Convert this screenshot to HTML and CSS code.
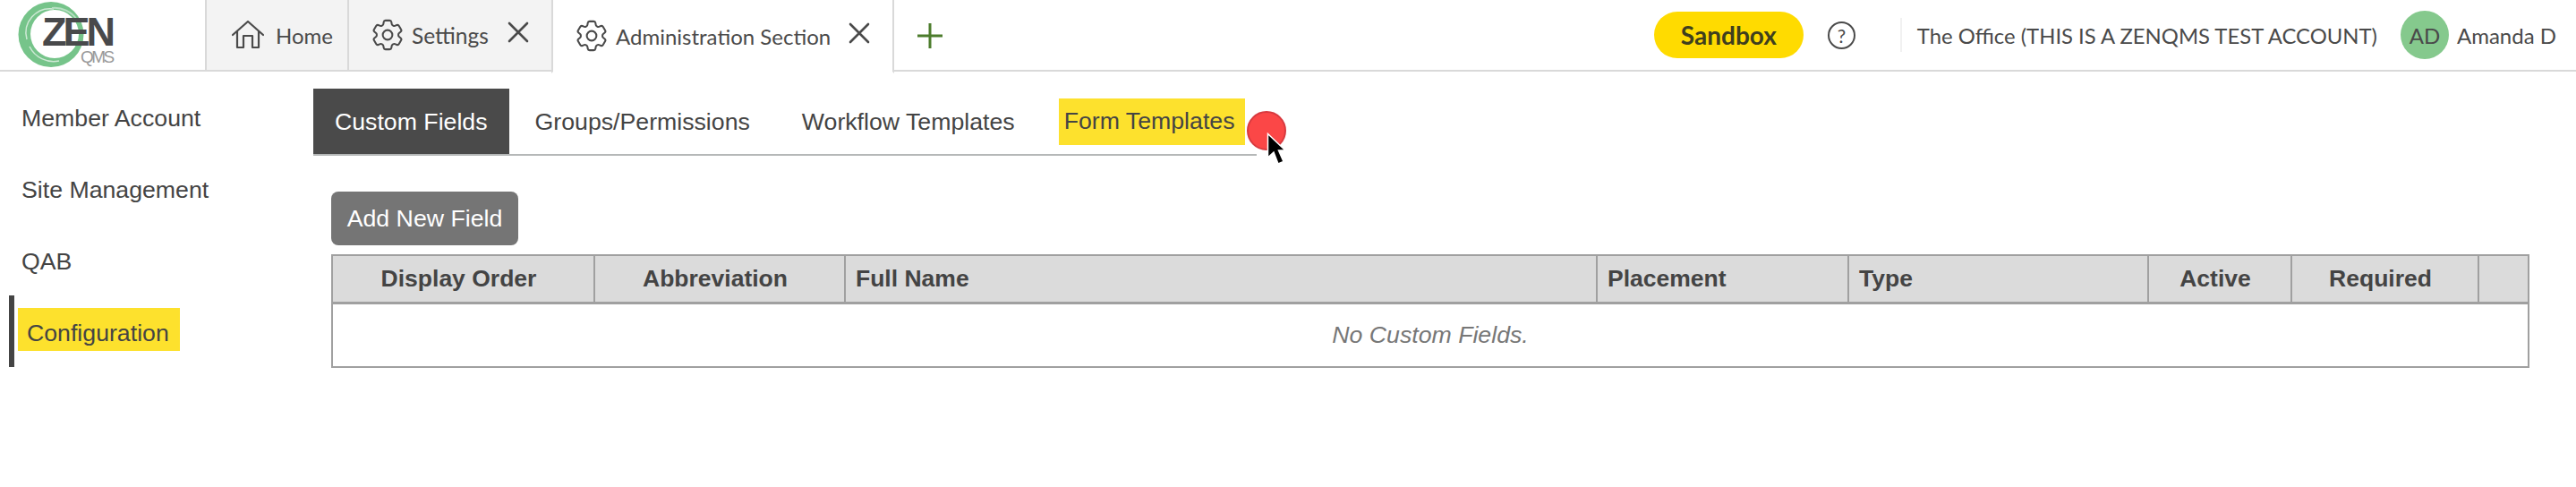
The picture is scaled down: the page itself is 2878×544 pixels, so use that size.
FILE: index.html
```html
<!DOCTYPE html>
<html lang="en">
<head>
<meta charset="utf-8">
<title>Administration Section</title>
<link rel="stylesheet" href="styles.css">
</head>
<body>
<header class="topbar">
  <div class="logo">
    <svg class="logo-ring" viewBox="0 0 76 78" width="76" height="78">
      <path fill-rule="evenodd" fill="#76c48a" d="M39 2 A36.500 36.500 0 1 0 39 75 A36.500 36.500 0 1 0 39 2 Z M43 11 A27 27 0 1 1 43 65 A27 27 0 1 1 43 11 Z"/>
      <path d="M12 44 A27 27 0 0 1 42 10 M15 52 A30 30 0 0 0 48 68" fill="none" stroke="#cfe9d6" stroke-width="1.500"/>
      <path d="M40 9 A30 30 0 0 1 68 22" fill="none" stroke="#b6dfc2" stroke-width="2"/>
    </svg>
    <span class="logo-zen">ZEN</span>
    <span class="logo-qms">QMS</span>
  </div>
  <nav class="apptabs">
    <div class="apptab home">
      <svg class="ico-home" viewBox="0 0 36 32" width="36" height="32"><path d="M1 16 L18 1 L35 16 M6 12 V30 H13 V17 H23 V30 H30 V12" fill="none" stroke="#4a4a4a" stroke-width="2.2" stroke-linejoin="round" stroke-linecap="round"/></svg>
      <span>Home</span>
    </div>
    <div class="apptab settings">
      <svg class="ico-gear" viewBox="2.500 2 19 20" width="34" height="36"><circle cx="12" cy="12" r="3" fill="none" stroke="#4a4a4a" stroke-width="1.150"/><path d="M9.594 3.94c.09-.542.56-.94 1.11-.94h2.593c.55 0 1.02.398 1.11.94l.213 1.281c.063.374.313.686.645.87.074.04.147.083.22.127.325.196.72.257 1.075.124l1.217-.456a1.125 1.125 0 0 1 1.37.49l1.296 2.247a1.125 1.125 0 0 1-.26 1.431l-1.003.827c-.293.241-.438.613-.43.992a7.723 7.723 0 0 1 0 .255c-.008.378.137.75.43.991l1.004.827c.424.35.534.955.26 1.43l-1.298 2.247a1.125 1.125 0 0 1-1.369.491l-1.217-.456c-.355-.133-.75-.072-1.076.124a6.470 6.470 0 0 1-.22.128c-.331.183-.581.495-.644.869l-.213 1.281c-.09.543-.56.94-1.11.94h-2.594c-.55 0-1.019-.398-1.11-.94l-.213-1.281c-.062-.374-.312-.686-.644-.87a6.520 6.520 0 0 1-.22-.127c-.325-.196-.72-.257-1.076-.124l-1.217.456a1.125 1.125 0 0 1-1.369-.49l-1.297-2.247a1.125 1.125 0 0 1 .26-1.431l1.004-.827c.292-.24.437-.613.43-.991a6.932 6.932 0 0 1 0-.255c.007-.38-.138-.751-.43-.992l-1.004-.827a1.125 1.125 0 0 1-.26-1.43l1.297-2.247a1.125 1.125 0 0 1 1.37-.491l1.216.456c.356.133.751.072 1.076-.124.072-.044.146-.086.22-.128.332-.183.582-.495.644-.869l.214-1.28Z" fill="none" stroke="#4a4a4a" stroke-width="1.150" stroke-linejoin="round"/></svg>
      <span>Settings</span>
      <svg class="ico-x" viewBox="0 0 24 24" width="24" height="24"><path d="M2 2 L22 22 M22 2 L2 22" stroke="#4a4a4a" stroke-width="2.600" stroke-linecap="round"/></svg>
    </div>
    <div class="apptab active">
      <svg class="ico-gear" viewBox="2.500 2 19 20" width="34" height="36"><circle cx="12" cy="12" r="3" fill="none" stroke="#4a4a4a" stroke-width="1.150"/><path d="M9.594 3.94c.09-.542.56-.94 1.11-.94h2.593c.55 0 1.02.398 1.11.94l.213 1.281c.063.374.313.686.645.87.074.04.147.083.22.127.325.196.72.257 1.075.124l1.217-.456a1.125 1.125 0 0 1 1.37.49l1.296 2.247a1.125 1.125 0 0 1-.26 1.431l-1.003.827c-.293.241-.438.613-.43.992a7.723 7.723 0 0 1 0 .255c-.008.378.137.75.43.991l1.004.827c.424.35.534.955.26 1.43l-1.298 2.247a1.125 1.125 0 0 1-1.369.491l-1.217-.456c-.355-.133-.75-.072-1.076.124a6.470 6.470 0 0 1-.22.128c-.331.183-.581.495-.644.869l-.213 1.281c-.09.543-.56.94-1.11.94h-2.594c-.55 0-1.019-.398-1.11-.94l-.213-1.281c-.062-.374-.312-.686-.644-.87a6.520 6.520 0 0 1-.22-.127c-.325-.196-.72-.257-1.076-.124l-1.217.456a1.125 1.125 0 0 1-1.369-.49l-1.297-2.247a1.125 1.125 0 0 1 .26-1.431l1.004-.827c.292-.24.437-.613.43-.991a6.932 6.932 0 0 1 0-.255c.007-.38-.138-.751-.43-.992l-1.004-.827a1.125 1.125 0 0 1-.26-1.43l1.297-2.247a1.125 1.125 0 0 1 1.37-.491l1.216.456c.356.133.751.072 1.076-.124.072-.044.146-.086.22-.128.332-.183.582-.495.644-.869l.214-1.28Z" fill="none" stroke="#4a4a4a" stroke-width="1.150" stroke-linejoin="round"/></svg>
      <span>Administration Section</span>
      <svg class="ico-x" viewBox="0 0 24 24" width="24" height="24"><path d="M2 2 L22 22 M22 2 L2 22" stroke="#4a4a4a" stroke-width="2.600" stroke-linecap="round"/></svg>
    </div>
    <div class="addtab">
      <svg viewBox="0 0 28 28" width="28" height="28"><path d="M14 0 V28 M0 14 H28" stroke="#4c7c2c" stroke-width="3"/></svg>
    </div>
  </nav>
  <div class="account">
    <span class="sandbox">Sandbox</span>
    <span class="help">?</span>
    <span class="divider"></span>
    <span class="org">The Office (THIS IS A ZENQMS TEST ACCOUNT)</span>
    <span class="avatar">AD</span>
    <span class="user">Amanda D</span>
  </div>
</header>
<div class="layout">
  <aside class="sidenav">
    <a class="sideitem">Member Account</a>
    <a class="sideitem">Site Management</a>
    <a class="sideitem">QAB</a>
    <a class="sideitem current"><mark class="hl">Configuration</mark></a>
  </aside>
  <main class="content">
    <div class="subtabs">
      <a class="subtab selected">Custom Fields</a>
      <a class="subtab">Groups/Permissions</a>
      <a class="subtab">Workflow Templates</a>
      <mark class="hl subtab-hl">Form Templates</mark>
      <span class="click-dot"></span>
      <svg class="cursor" viewBox="0 0 22 38" width="22" height="38"><path d="M1.500 1.500 V28 L8 22 L13 35 L19 32.500 L13.500 20 L21 20 Z" fill="#000" stroke="#fff" stroke-width="1.500"/></svg>
    </div>
    <button class="addbtn">Add New Field</button>
    <table class="fields">
      <thead>
        <tr>
          <th class="c-order center">Display Order</th>
          <th class="c-abbr center">Abbreviation</th>
          <th class="c-name">Full Name</th>
          <th class="c-place">Placement</th>
          <th class="c-type">Type</th>
          <th class="c-active center">Active</th>
          <th class="c-req center">Required</th>
          <th class="c-last"></th>
        </tr>
      </thead>
      <tbody>
        <tr><td class="empty" colspan="8">No Custom Fields.</td></tr>
      </tbody>
    </table>
  </main>
</div>
</body>
</html>
```
FILE: styles.css
```css
* { box-sizing: border-box; }
html, body { margin: 0; padding: 0; background: #fff; }
body { width: 2878px; height: 544px; overflow: hidden; font-family: "Liberation Sans", Arial, sans-serif; color: #444; }

.topbar { display: flex; height: 80px; border-bottom: 2px solid #d9d9d9; font-family: Lato, sans-serif; color: #4a4a4a; }
.logo { position: relative; width: 229px; flex: none; }
.logo-ring { position: absolute; left: 18px; top: 0; }
.logo-zen { position: absolute; left: 47px; top: 18px; font-family: "Liberation Sans", sans-serif; font-weight: 700; font-size: 45px; line-height: 36px; letter-spacing: -4px; color: #48494b; }
.logo-qms { position: absolute; left: 90px; top: 57px; font-family: "Liberation Sans", sans-serif; font-size: 19px; line-height: 14px; letter-spacing: -2.500px; color: #999; }

.apptabs { display: flex; height: 80px; flex: none; }
.apptab { display: flex; align-items: center; height: 80px; border-left: 2px solid #d9d9d9; border-bottom: 2px solid #d9d9d9; background: #f3f3f3; font-size: 24px; }
.apptab.home { width: 159px; padding-left: 28px; gap: 13px; }
.apptab.settings { width: 228px; padding-left: 26px; gap: 10px; }
.apptab.settings .ico-x { margin: -6px 0 0 11px; }
.apptab.settings span { font-size: 24.500px; }
.apptab.active { width: 383px; padding-left: 26px; gap: 10px; background: #fff; border-bottom-color: #fff; border-right: 2px solid #d9d9d9; height: 82px; }
.apptab.active .ico-x { margin: -6px 0 0 10px; }
.addtab { display: flex; align-items: center; padding-left: 26px; }

.account { display: flex; align-items: center; margin-left: auto; height: 78px; padding-right: 22px; font-size: 24px; }
.sandbox { display: flex; align-items: center; justify-content: center; width: 167px; height: 52px; border-radius: 26px; background: #ffdb00; color: #3f3f1e; font-weight: 700; font-size: 28px; }
.help { display: flex; align-items: center; justify-content: center; width: 31px; height: 31px; margin-left: 27px; border: 2px solid #4a4a4a; border-radius: 50%; font-size: 21px; }
.divider { width: 2px; height: 38px; margin-left: 50px; background: #f1f1f1; }
.org { margin-left: 17px; font-size: 23.850px; white-space: nowrap; }
.avatar { display: flex; align-items: center; justify-content: center; width: 54px; height: 54px; margin-left: 26px; border-radius: 50%; background: #85c98d; }
.user { margin-left: 9px; white-space: nowrap; }

.layout { display: flex; }
.sidenav { width: 350px; flex: none; padding-top: 10px; }
.sideitem { display: flex; align-items: center; height: 80px; margin-left: 10px; padding: 5px 0 0 14px; font-size: 26.700px; color: #444; }
.sideitem.current { border-left: 6px solid #444; padding: 0 0 0 4px; }
.hl { background: #fde12d; color: #444; }
.sideitem .hl { display: flex; align-items: center; height: 48px; padding: 8px 12px 0 10px; margin-top: -4px; }

.content { flex: 1; padding-top: 19px; min-width: 0; }
.subtabs { position: relative; display: flex; align-items: center; width: 1054px; height: 75px; border-bottom: 2px solid #b5b8b8; font-size: 26.700px; }
.subtab { display: flex; align-items: center; height: 73px; padding: 2px 29px 0; color: #444; }
.subtab.selected { padding: 2px 24px 0; background: #4a4a4a; color: #fff; }
.subtab-hl { display: flex; align-items: center; height: 52px; margin-left: 20px; padding: 0 12px 0 6px; }
.click-dot { position: absolute; left: 1043px; top: 25px; width: 44px; height: 44px; border: 2px solid #d83a3f; border-radius: 50%; background: #fb4747; }
.cursor { position: absolute; left: 1065px; top: 49px; }

.addbtn { display: block; width: 209px; height: 60px; margin: 40px 0 10px 20px; padding: 0; border: 0; border-radius: 8px; background: #757575; color: #fff; font-family: inherit; font-size: 26.700px; }

.fields { table-layout: fixed; border-collapse: collapse; width: 2454px; margin-left: 20px; font-size: 26.700px; color: #444; }
.fields th { height: 53px; padding: 0 11px; background: #dbdbdb; border: 2px solid #a0a0a0; border-bottom-width: 3px; text-align: left; font-weight: 700; font-size: 26.500px; }
.fields th.center { padding: 0 16px 0 6px; text-align: center; }
.c-order { width: 293px; }
.c-abbr { width: 280px; }
.c-name { width: 840px; }
.c-place { width: 281px; }
.c-type { width: 335px; }
.c-active { width: 160px; }
.c-req { width: 209px; }
.c-last { width: 56px; }
.fields td.empty { height: 72px; border: 2px solid #a0a0a0; text-align: center; font-style: italic; color: #777; }
```
